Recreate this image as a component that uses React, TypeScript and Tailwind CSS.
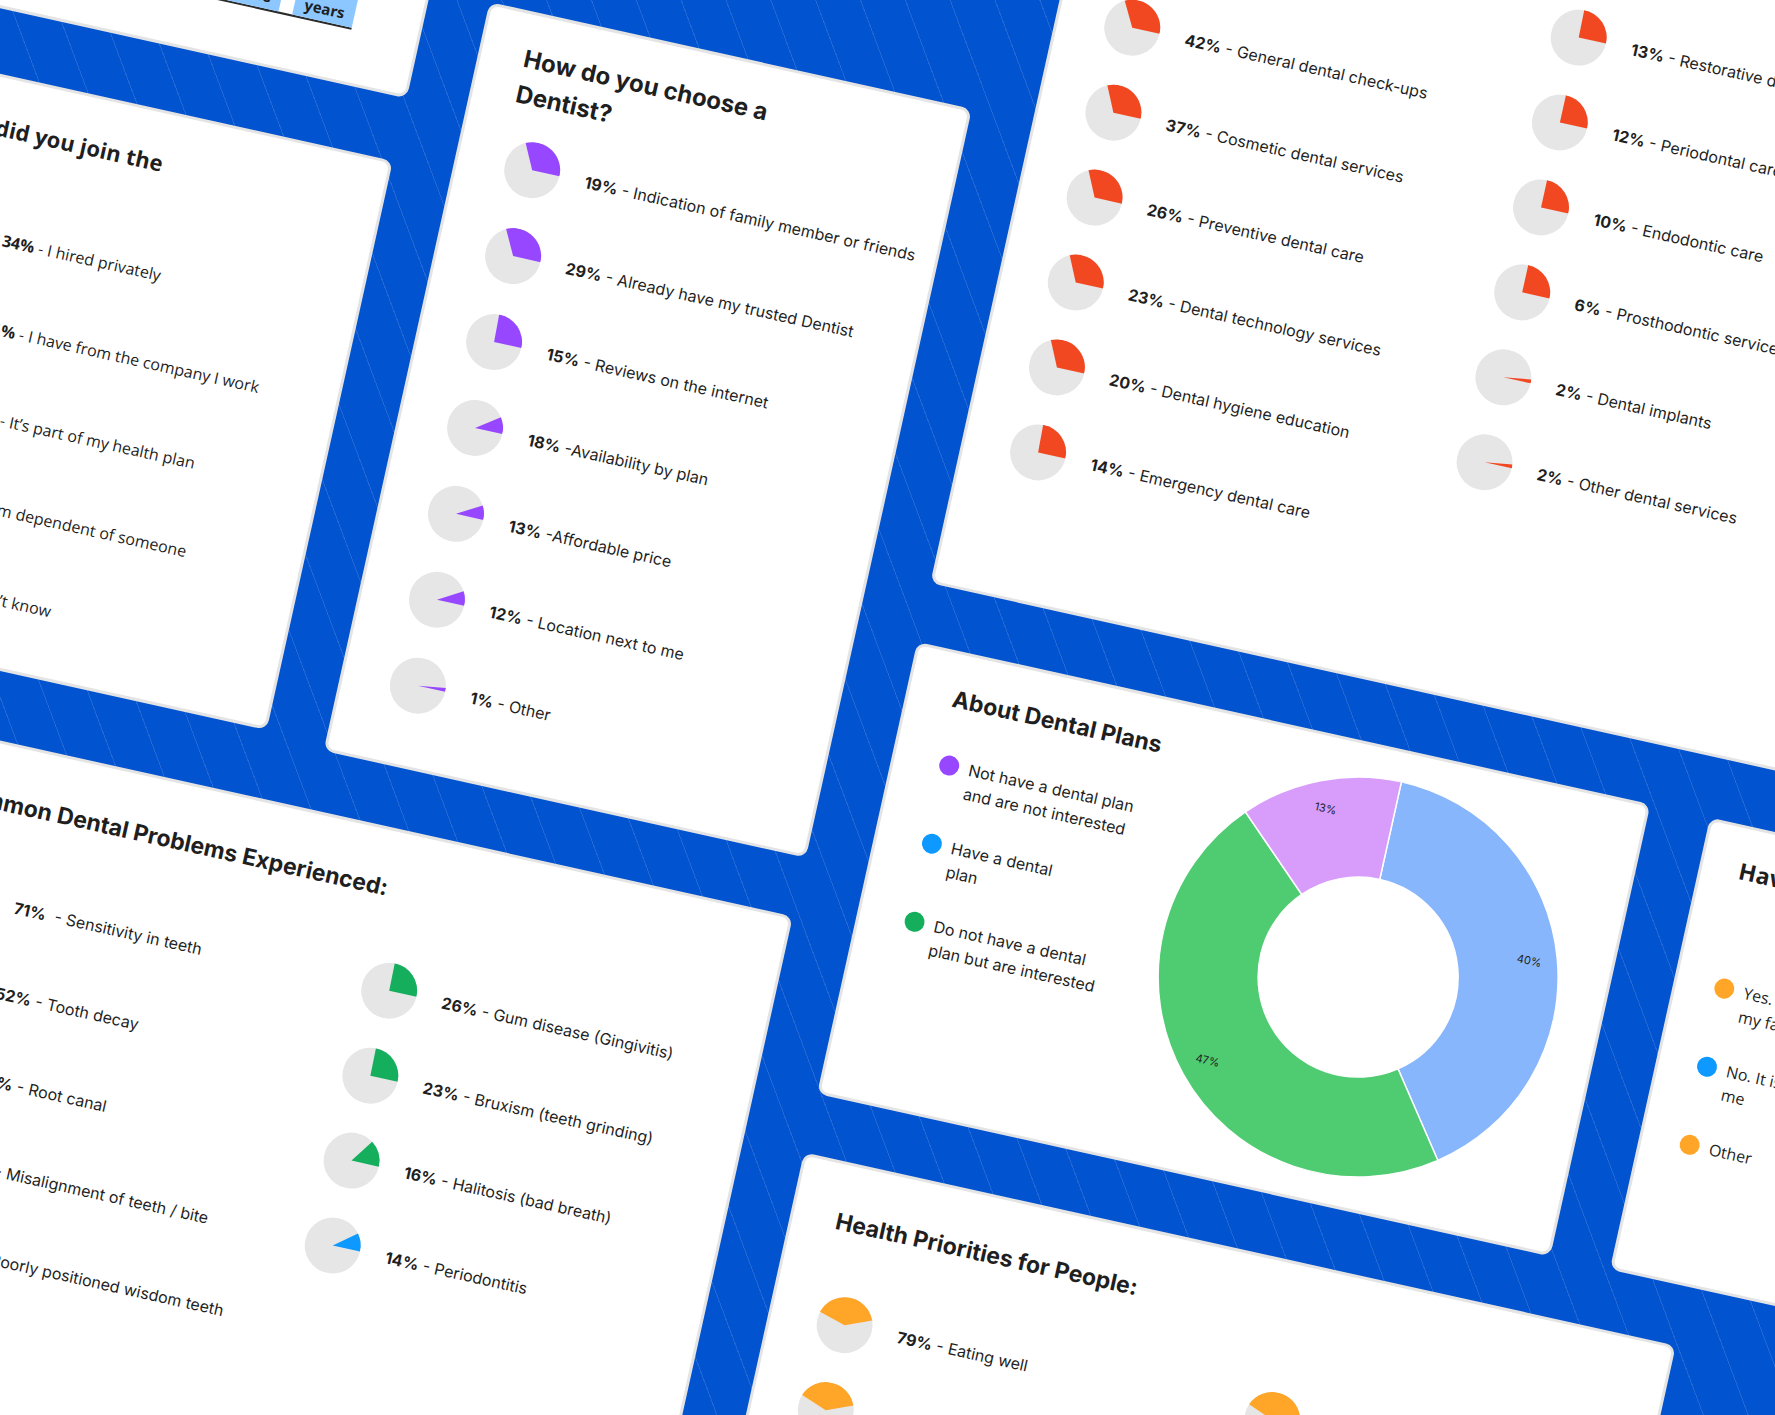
import React from "react";

type Slice = { pct: string; label: string; sweep: number; color: string; start?: number };

const RED = "#f24822";
const PURPLE = "#9747ff";
const GREEN = "#14ae5c";
const BLUE = "#0d99ff";
const ORANGE = "#ffa629";

const Pie = ({ sweep, color, start = 90 }: { sweep: number; color: string; start?: number }) => {
  const at = (a: number) => {
    const t = (a * Math.PI) / 180;
    return `${(28 + 28 * Math.sin(t)).toFixed(2)} ${(28 - 28 * Math.cos(t)).toFixed(2)}`;
  };
  const large = sweep > 180 ? 1 : 0;
  return (
    <svg width="56" height="56" viewBox="0 0 56 56" className="shrink-0">
      <circle cx="28" cy="28" r="28" fill="#e6e6e6" />
      <path d={`M28 28 L${at(start)} A28 28 0 ${large} 0 ${at(start - sweep)} Z`} fill={color} />
    </svg>
  );
};

const PieRow = ({ item, wide }: { item: Slice; wide?: boolean }) => (
  <div className="flex items-center gap-[26px]">
    <Pie sweep={item.sweep} color={item.color} start={item.start} />
    <p
      className={
        wide
          ? "whitespace-pre font-[family-name:'Open_Sans',sans-serif] text-[16px] leading-6"
          : "whitespace-pre text-[16px] leading-6"
      }
    >
      <span className="font-bold">{item.pct}</span>
      {item.label}
    </p>
  </div>
);

const card = "shrink-0 rounded-[10px] border-[3px] border-[#e4e4e4] bg-white";

const TenureCard = () => {
  const bars = [
    { top: "<1", h: "h-[60px]" },
    { top: "1-2", h: "h-[95px]" },
    { top: "2-3", h: "h-[120px]" },
    { top: "3-5", h: "h-[145px]" },
    { top: "+5", h: "h-[125px]" },
  ];
  return (
    <div className={`${card} flex h-[330px] w-[494px] flex-col justify-between px-[41px] pt-[33px] pb-[52px]`}>
      <h2 className="w-[330px] text-[24px] font-bold leading-8">How long have you had a dental plan?</h2>
      <div className="ml-[20px] flex w-[361px] items-end gap-[14px] border-b-2 border-[#2b2b2b]">
        {bars.map((b) => (
          <div
            key={b.top}
            className={`${b.h} flex w-[61px] flex-col items-center justify-end bg-[#8cc8ff] pb-[3px] font-[family-name:'Open_Sans',sans-serif] text-[15px] font-bold leading-5`}
          >
            <span>{b.top}</span>
            <span>years</span>
          </div>
        ))}
      </div>
    </div>
  );
};

const joinItems: Slice[] = [
  { pct: "34%", label: " - I hired privately", sweep: 115, color: BLUE },
  { pct: "31%", label: " - I have from the company I work", sweep: 112, color: BLUE },
  { pct: "18%", label: " - It’s part of my health plan", sweep: 92, color: BLUE },
  { pct: "12%", label: " - I’m dependent of someone", sweep: 60, color: BLUE },
  { pct: "5%", label: " - I don’t know", sweep: 20, color: BLUE },
];

const JoinCard = () => (
  <div className={`${card} h-[583px] w-[494px] px-[41px] pt-[33px] pb-[38px]`}>
    <h2 className="w-[250px] font-[family-name:'Open_Sans',sans-serif] text-[22px] font-bold leading-8">
      How did you join the plan?
    </h2>
    <div className="mt-[34px] flex flex-col gap-[32px] pl-[4px]">
      {joinItems.map((it) => (
        <PieRow key={it.label} item={it} wide />
      ))}
    </div>
  </div>
);

const dentistItems: Slice[] = [
  { pct: "19%", label: " - Indication of family member or friends", sweep: 116, color: PURPLE },
  { pct: "29%", label: " - Already have my trusted Dentist", sweep: 117, color: PURPLE },
  { pct: "15%", label: " - Reviews on the internet", sweep: 92, color: PURPLE },
  { pct: "18%", label: " -Availability by plan", sweep: 35, color: PURPLE },
  { pct: "13%", label: " -Affordable price", sweep: 30, color: PURPLE },
  { pct: "12%", label: " - Location next to me", sweep: 30, color: PURPLE },
  { pct: "1%", label: " - Other", sweep: 8, color: PURPLE },
];

const DentistCard = () => (
  <div className={`${card} mt-[218px] w-[494px] px-[43px] pt-[27px] pb-[53px]`}>
    <h2 className="w-[290px] text-[24px] font-bold leading-9">How do you choose a Dentist?</h2>
    <div className="mt-[25px] flex flex-col gap-[32px] pl-[4px]">
      {dentistItems.map((it) => (
        <PieRow key={it.label} item={it} />
      ))}
    </div>
  </div>
);

const WideCard = ({
  title,
  left,
  right,
  className,
}: {
  title: string;
  left: Slice[];
  right: Slice[];
  className: string;
}) => (
  <div className={`${card} w-[893px] px-[43px] pt-[41px] ${className}`}>
    <h2 className="text-[23px] font-bold leading-8">{title}</h2>
    <div className="mt-[56px] grid grid-cols-[438px_1fr] items-start pl-[3px]">
      <div className="flex flex-col gap-[31px]">
        {left.map((it) => (
          <PieRow key={it.label} item={it} />
        ))}
      </div>
      <div className="flex flex-col gap-[31px]">
        {right.map((it) => (
          <PieRow key={it.label} item={it} />
        ))}
      </div>
    </div>
  </div>
);

const servicesLeft: Slice[] = [
  { pct: "58%", label: " - Teeth cleaning", sweep: 118, color: RED },
  { pct: "42%", label: " - General dental check-ups", sweep: 118, color: RED },
  { pct: "37%", label: " - Cosmetic dental services", sweep: 115, color: RED },
  { pct: "26%", label: " - Preventive dental care", sweep: 115, color: RED },
  { pct: "23%", label: " - Dental technology services", sweep: 115, color: RED },
  { pct: "20%", label: " - Dental hygiene education", sweep: 115, color: RED },
  { pct: "14%", label: " - Emergency dental care", sweep: 92, color: RED },
];

const servicesRight: Slice[] = [
  { pct: "13%", label: " - Restorative dental care", sweep: 91, color: RED },
  { pct: "12%", label: " - Periodontal care", sweep: 90, color: RED },
  { pct: "10%", label: " - Endodontic care", sweep: 90, color: RED },
  { pct: "6%", label: " - Prosthodontic services", sweep: 90, color: RED },
  { pct: "2%", label: " - Dental implants", sweep: 8, color: RED },
  { pct: "2%", label: " - Other dental services", sweep: 8, color: RED },
];

const problemsLeft: Slice[] = [
  { pct: "71%", label: "  - Sensitivity in teeth", sweep: 118, color: GREEN },
  { pct: "52%", label: " - Tooth decay", sweep: 115, color: GREEN },
  { pct: "38%", label: " - Root canal", sweep: 110, color: GREEN },
  { pct: "31%", label: " - Misalignment of teeth / bite", sweep: 100, color: GREEN },
  { pct: "28%", label: " - Poorly positioned wisdom teeth", sweep: 95, color: GREEN },
];

const problemsRight: Slice[] = [
  { pct: "26%", label: " - Gum disease (Gingivitis)", sweep: 91, color: GREEN },
  { pct: "23%", label: " - Bruxism (teeth grinding)", sweep: 91, color: GREEN },
  { pct: "16%", label: " - Halitosis (bad breath)", sweep: 55, color: GREEN },
  { pct: "14%", label: " - Periodontitis", sweep: 38, color: BLUE },
];

const healthLeft: Slice[] = [
  { pct: "79%", label: " - Eating well", sweep: 142, color: ORANGE, start: 68 },
  { pct: "66%", label: " - Exercising regularly", sweep: 138, color: ORANGE, start: 68 },
  { pct: "54%", label: " - Sleeping well", sweep: 130, color: ORANGE, start: 68 },
];

const healthRight: Slice[] = [
  { pct: "47%", label: " - Oral hygiene", sweep: 136, color: ORANGE, start: 68 },
  { pct: "39%", label: " - Mental health", sweep: 120, color: ORANGE, start: 68 },
  { pct: "21%", label: " - Regular check-ups", sweep: 90, color: ORANGE, start: 68 },
];

const Donut = () => {
  const pt = (rad: number, a: number) => {
    const t = (a * Math.PI) / 180;
    return `${(200 + rad * Math.sin(t)).toFixed(2)} ${(200 - rad * Math.cos(t)).toFixed(2)}`;
  };
  const segs = [
    { a0: 0, a1: 144, color: "#87b6fd", label: "40%" },
    { a0: 144, a1: 313.2, color: "#4fcb71", label: "47%" },
    { a0: 313.2, a1: 360, color: "#d89cfb", label: "13%" },
  ];
  return (
    <svg width="400" height="400" viewBox="0 0 400 400" className="mr-[45px] shrink-0">
      {segs.map((s) => {
        const l = s.a1 - s.a0 > 180 ? 1 : 0;
        return (
          <path
            key={s.label}
            d={`M${pt(200, s.a0)} A200 200 0 ${l} 1 ${pt(200, s.a1)} L${pt(100, s.a1)} A100 100 0 ${l} 0 ${pt(100, s.a0)} Z`}
            fill={s.color}
            stroke="#ffffff"
            strokeWidth="1.5"
          />
        );
      })}
      {segs.map((s) => {
        const t = (((s.a0 + s.a1) / 2) * Math.PI) / 180;
        return (
          <text
            key={s.label + "t"}
            x={200 + 172 * Math.sin(t)}
            y={200 - 172 * Math.cos(t)}
            fontSize="11"
            fill="#1f1f1f"
            textAnchor="middle"
            dominantBaseline="central"
          >
            {s.label}
          </text>
        );
      })}
    </svg>
  );
};

const Legend = ({ color, lines, wide }: { color: string; lines: string[]; wide?: boolean }) => (
  <div className="flex items-start gap-[10px]">
    <span className="mt-[2px] h-5 w-5 shrink-0 rounded-full" style={{ backgroundColor: color }} />
    <p
      className={
        wide
          ? "whitespace-nowrap font-[family-name:'Open_Sans',sans-serif] text-[16px] leading-6"
          : "whitespace-nowrap text-[16px] leading-6"
      }
    >
      {lines.map((l) => (
        <span key={l} className="block">
          {l}
        </span>
      ))}
    </p>
  </div>
);

const AboutCard = () => (
  <div className={`${card} flex h-[463px] w-[751px] items-center`}>
    <div className="min-w-0 flex-1 self-start px-[44px] pt-[29px]">
      <h2 className="whitespace-nowrap text-[23px] font-bold leading-8">About Dental Plans</h2>
      <div className="mt-[38px] flex flex-col gap-[32px] pl-[1px]">
        <Legend color={PURPLE} lines={["Not have a dental plan", "and are not interested"]} />
        <Legend color={BLUE} lines={["Have a dental", "plan"]} />
        <Legend color={GREEN} lines={["Do not have a dental", "plan but are interested"]} />
      </div>
    </div>
    <Donut />
  </div>
);

const FamilyCard = () => (
  <div className={`${card} h-[463px] w-[560px] px-[37px] pt-[26px]`}>
    <h2 className="whitespace-nowrap font-[family-name:'Open_Sans',sans-serif] text-[23px] font-bold leading-8">
      Have you offered a dental plan to your family?
    </h2>
    <div className="mt-[91px] flex flex-col gap-[32px] pl-[1px]">
      <Legend color={ORANGE} lines={["Yes. I’d like to offer it to", "my family"]} wide />
      <Legend color={BLUE} lines={["No. It is not important for", "me"]} wide />
      <Legend color={ORANGE} lines={["Other"]} wide />
    </div>
  </div>
);

export default function App() {
  return (
    <div className="relative h-[1415px] w-[1775px] overflow-hidden bg-[#0253cf] font-[family-name:Inter,sans-serif] text-[#1f1f1f]">
      <div className="absolute inset-0 bg-[repeating-linear-gradient(69.5deg,transparent_0px,transparent_41px,rgba(255,255,255,0.13)_41px,rgba(255,255,255,0.13)_42px)]" />
      <div className="absolute left-[-65px] top-[-629px] flex w-[2700px] origin-top-left rotate-[12.5deg] items-start gap-[62px] pl-[124px] pt-[135px]">
        <div className="mt-[143px] flex w-[1048px] shrink-0 flex-col">
          <div className="flex items-start gap-[60px]">
            <div className="flex w-[494px] shrink-0 flex-col gap-[64px]">
              <TenureCard />
              <JoinCard />
            </div>
            <DentistCard />
          </div>
          <WideCard
            title="Common Dental Problems Experienced:"
            left={problemsLeft}
            right={problemsRight}
            className="ml-[155px] mt-[60px] h-[720px]"
          />
        </div>
        <div className="flex shrink-0 flex-col gap-[60px]">
          <WideCard
            title="Which dental services do you use?"
            left={servicesLeft}
            right={servicesRight}
            className="pb-[120px]"
          />
          <div className="flex items-start gap-[61px]">
            <AboutCard />
            <FamilyCard />
          </div>
          <WideCard
            title="Health Priorities for People:"
            left={healthLeft}
            right={healthRight}
            className="h-[600px]"
          />
        </div>
      </div>
    </div>
  );
}
